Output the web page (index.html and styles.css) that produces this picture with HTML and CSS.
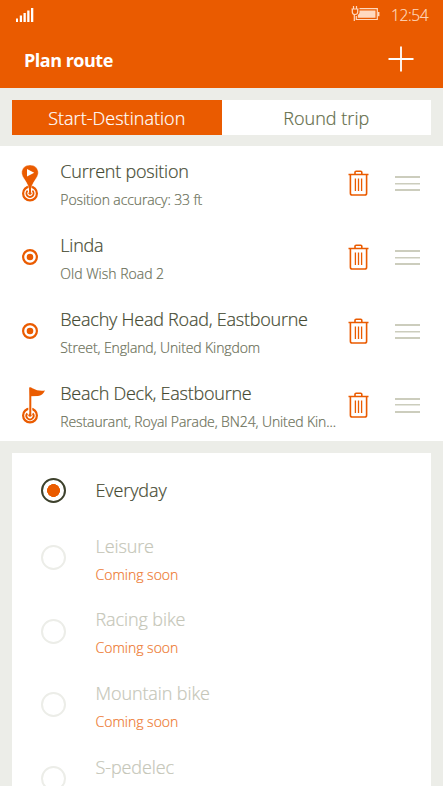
FILE: index.html
```html
<!DOCTYPE html>
<html lang="en">
<head>
<meta charset="utf-8">
<meta name="viewport" content="width=device-width">
<title>Plan route</title>
<link rel="stylesheet" href="styles.css">
</head>
<body>
<svg class="defs" aria-hidden="true">
  <symbol id="trash" viewBox="0 0 22 26"><path d="M.5 4.500h20M7 4V2.300Q7 1.200 8.100 1.200H12.700Q13.800 1.200 13.800 2.300V4M2.400 4.500V23.200Q2.400 25 4.200 25H16.800Q18.600 25 18.600 23.200V4.500" fill="none" stroke="#ea5b00" stroke-width="1.600"/><path d="M7.400 8.500V21M10.500 8.500V21M13.600 8.500V21" stroke="#ea5b00" stroke-width="1.300"/></symbol>
  <symbol id="target" viewBox="0 0 16 16"><circle cx="8" cy="8" r="6.900" fill="none" stroke="#ea5b00" stroke-width="2.200"/><circle cx="8" cy="8" r="3.300" fill="#ea5b00"/></symbol>
</svg>
<header>
  <div class="status">
    <svg class="signal" width="18" height="14" viewBox="0 0 18 14" fill="#fff"><path d="M0 10.500h2v3.500H0zM3.800 7.500h2.200V14H3.800zM7.500 5h2.300v9H7.500zM11.200 2.500h2.300V14h-2.300zM15 0h2.300v14H15z"/></svg>
    <svg class="battery" width="29" height="16" viewBox="0 0 29 16"><g fill="none" stroke="#ffd9bf"><path d="M2.500 0v3M5.500 0v3M.5 3h7M1.300 3v3Q1.300 8.500 4 8.500Q6.700 8.500 6.700 6V3M3.300 8.500V15M8.500 2.700H26.300V13.500H5.300V10" stroke-width="1.200"/><path d="M27.700 6v4.200" stroke-width="1.500"/></g><path d="M8.500 4.500H24.500V11.700H6.800V9.300L8.500 7z" fill="#ffd9bf"/></svg>
    <time>12:54</time>
  </div>
  <div class="bar"><h1>Plan route</h1><svg width="26" height="26" viewBox="0 0 26 26"><path d="M.5 13h25M13 .5v25" stroke="#fff" stroke-width="1.800"/></svg></div>
</header>
<nav><button class="active">Start-Destination</button><button>Round trip</button></nav>
<ul class="stops">
  <li><svg class="mark" width="26" height="42" viewBox="0 0 26 42"><circle cx="9" cy="31.500" r="6.900" fill="none" stroke="#ea5b00" stroke-width="2.200"/><path d="M9 31Q7.800 23 2.900 16.500C-2 10 2 3 9 3S20 10 15.100 16.500Q10.200 23 9 31z" fill="#ea5b00" stroke="#fff" stroke-width=".4"/><path d="M9 19V30" stroke="#ea5b00" stroke-width="2"/><path d="M6.600 28.700A3.600 3.600 0 1 0 11.400 28.700" fill="none" stroke="#ea5b00" stroke-width="1.800"/><circle cx="9" cy="31.200" r="1.500" fill="#ea5b00"/><path d="M6 7L13.200 10.800L6 14.600z" fill="#fff"/></svg><div class="text"><h2>Current position</h2><p>Position accuracy: 33 ft</p></div><svg class="trash" width="22" height="26"><use href="#trash"/></svg><i class="grip"></i></li>
  <li><svg class="mark" width="26" height="16"><use href="#target" width="16" height="16" x="1"/></svg><div class="text"><h2>Linda</h2><p class="roomy">Old Wish Road 2</p></div><svg class="trash" width="22" height="26"><use href="#trash"/></svg><i class="grip"></i></li>
  <li><svg class="mark" width="26" height="16"><use href="#target" width="16" height="16" x="1"/></svg><div class="text"><h2>Beachy Head Road, Eastbourne</h2><p>Street, England, United Kingdom</p></div><svg class="trash" width="22" height="26"><use href="#trash"/></svg><i class="grip"></i></li>
  <li><svg class="mark" width="26" height="42" viewBox="0 0 26 42"><circle cx="9" cy="31.500" r="6.900" fill="none" stroke="#ea5b00" stroke-width="2.200"/><path d="M6.300 29.300A3.600 3.600 0 1 0 11.700 29.300" fill="none" stroke="#ea5b00" stroke-width="1.800"/><path d="M9.300 22V29" stroke="#fff" stroke-width="4"/><path d="M9.300 3.500V30" stroke="#ea5b00" stroke-width="2"/><circle cx="9" cy="31.200" r="1.600" fill="#ea5b00"/><path d="M8.500 3.500Q10.500 3.500 12 4.500Q17 7.500 24 6.500Q21.500 11.500 17 12L9 12.300z" fill="#ea5b00"/></svg><div class="text"><h2>Beach Deck, Eastbourne</h2><p>Restaurant, Royal Parade, BN24, United Kin...</p></div><svg class="trash" width="22" height="26"><use href="#trash"/></svg><i class="grip"></i></li>
</ul>
<main>
  <div class="option selected"><i class="radio"></i><div><h2>Everyday</h2></div></div>
  <div class="option"><i class="radio"></i><div><h2>Leisure</h2><p>Coming soon</p></div></div>
  <div class="option"><i class="radio"></i><div><h2>Racing bike</h2><p>Coming soon</p></div></div>
  <div class="option"><i class="radio"></i><div><h2>Mountain bike</h2><p>Coming soon</p></div></div>
  <div class="option last"><i class="radio"></i><div><h2>S-pedelec</h2></div></div>
</main>
</body>
</html>
```
FILE: styles.css
```css
* { box-sizing: border-box; }
html { background: #fff; }
body { margin: 0; height: 786px; overflow: hidden; background: #ecede8; font-family: "Open Sans", "Noto Sans", sans-serif; font-weight: 300; color: #454a32; display: flex; flex-direction: column; }
h1, h2, p, ul { margin: 0; padding: 0; }
h2, p, button, time, h1 { white-space: nowrap; }
h2, p, button, time { -webkit-text-stroke: .2px currentColor; }
.defs { display: none; }
header { height: 88.4px; flex: none; background: #ea5b00; color: #fff; }
.status { height: 30px; display: flex; padding: 0 15px 0 16px; }
.signal { margin-top: 8px; }
.battery { margin: 6px 11px 0 auto; }
time { width: 37px; font-size: 15.500px; line-height: 30px; color: #ffd9bf; letter-spacing: -.4px; }
.bar { height: 58px; display: flex; align-items: center; justify-content: space-between; padding: 0 29px 0 24px; }
h1 { font-size: 18px; font-weight: 700; letter-spacing: -.5px; line-height: 24px; padding-top: 1px; }
nav { flex: none; height: 58px; padding: 11.500px 12px; display: flex; }
button { flex: 1; border: 0; padding: 0; background: #fff; color: #626b48; font: 300 18px/36px "Open Sans", sans-serif; letter-spacing: .03px; }
.active { background: #ea5b00; color: #fff; }
.stops { flex: none; list-style: none; background: #fff; height: 295px; }
.stops li { height: 73.800px; display: flex; align-items: center; padding-left: 21px; }
.mark { flex: none; margin-right: 13.300px; }
.text { width: 287.700px; padding-top: 3px; }
h2 { font-size: 18px; line-height: 28px; font-weight: 300; letter-spacing: -.23px; }
p { font-size: 14px; line-height: 24px; color: #6b7059; letter-spacing: -.11px; }
.text p { margin-top: 3px; }
.text .roomy { letter-spacing: 0; }
.trash { flex: none; }
.grip { flex: none; margin: 1px 0 0 25px; width: 25px; height: 15px; border: solid #cccdbd; border-width: 2px 0; background: linear-gradient(#cccdbd, #cccdbd) center / 100% 1.500px no-repeat; }
main { flex: 1; min-height: 0; margin: 12px 12px 0; background: #fff; overflow: hidden; }
.option { display: flex; align-items: center; height: 73.800px; padding-left: 29px; }
.option h2 { color: #c5c6b8; letter-spacing: -.1px; }
.option p { color: #ee7a32; margin-top: 3px; line-height: 23px; letter-spacing: 0; }
.option div { padding-top: 2.500px; }
.radio { flex: none; width: 25px; height: 25px; border: 2.500px solid #ecede8; border-radius: 50%; margin-right: 29.500px; }
.selected { height: 67px; padding-top: 7px; }
.selected div { padding-top: 0; }
.selected h2 { color: #454a32; }
.selected .radio { border-color: #3d412c; background: radial-gradient(circle, #ea5b00 6.200px, #fff 6.700px); }
.last div { padding: 0 0 23px; }
```
